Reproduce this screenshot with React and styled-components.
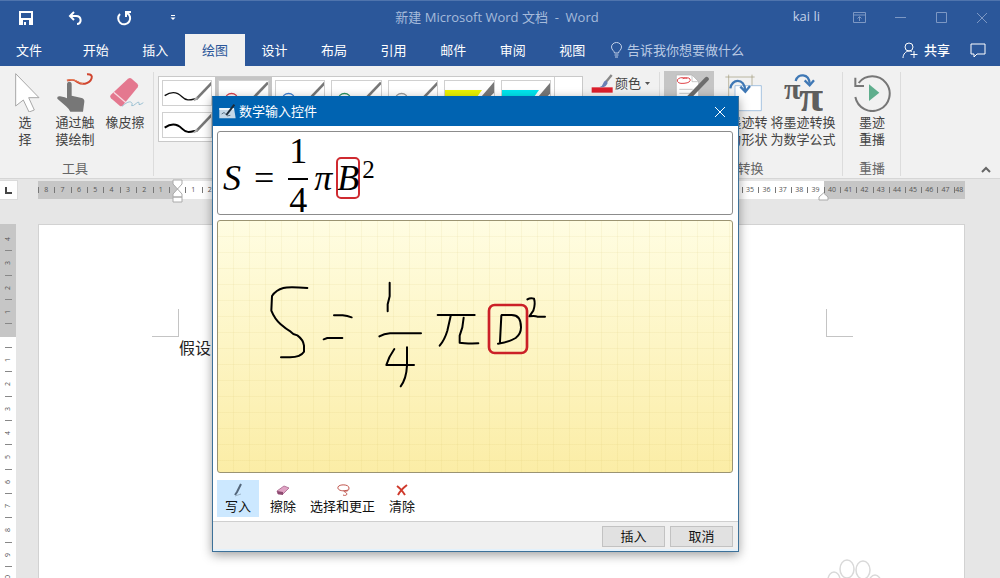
import React from 'react';
import styled, { createGlobalStyle, css } from 'styled-components';

const word = '#2b579a';

const Global = createGlobalStyle`
  *, *::before, *::after { box-sizing: border-box; }
  body {
    margin: 0;
    font-family: "Open Sans", "Noto Sans CJK SC", sans-serif;
    font-size: 13px;
    line-height: 17px;
    color: #444;
  }
  button, input { font: inherit; color: inherit; }
  svg { display: block; flex: none; }
`;

const bare = css`
  border: 0;
  padding: 0;
  margin: 0;
  background: none;
`;

/* ---------- shell ---------- */

const Shell = styled.div`
  position: relative;
  display: flex;
  flex-direction: column;
  height: 100vh;
  overflow: hidden;
  background: #e6e6e6;
`;

const TitleBar = styled.header`
  display: grid;
  grid-template-columns: 1fr auto 1fr;
  align-items: center;
  height: 34px;
  padding-right: 6px;
  border-top: 1px solid #4f74ad;
  background: ${word};
  color: #a6bbdb;
`;

const QuickAccess = styled.div`
  display: flex;
  gap: 25px;
  padding-left: 14px;
  color: #fff;
`;

const WindowControls = styled.div`
  display: flex;
  align-items: center;
  justify-content: flex-end;
  gap: 17px;
  color: #7d98c4;
`;

const IconButton = styled.button`
  ${bare}
  display: flex;
  align-items: center;
  justify-content: center;
  width: 24px;
  height: 24px;
`;

const UserName = styled.span`
  margin-right: 10px;
  padding-bottom: 3px;
  font-size: 13px;
  color: #c3d1e8;
`;

const DocTitle = styled.h1`
  margin: 0;
  font-size: 13px;
  font-weight: 400;
`;

const TabBar = styled.nav`
  display: flex;
  align-items: stretch;
  height: 32px;
  background: ${word};
  color: #fff;
`;

const Tabs = styled.div`
  display: flex;
  width: 536px;
`;

const Tab = styled.button`
  ${bare}
  flex: 1;
  background: ${p => (p.$active ? '#f1f1f1' : 'transparent')};
  color: ${p => (p.$active ? word : '#fff')};
`;

const FileTab = styled(Tab)`
  flex: none;
  width: 58px;
  margin-right: 8px;
`;

const TellMe = styled.label`
  display: flex;
  align-items: center;
  gap: 4px;
  padding-left: 8px;
  color: #c3d1e8;
`;

const TellMeInput = styled.input`
  ${bare}
  width: 140px;
  height: 28px;
  outline: 0;
  &::placeholder { color: #b9c9e3; opacity: 1; }
`;

const TabBarEnd = styled.div`
  display: flex;
  align-items: center;
  gap: 20px;
  margin-left: auto;
  padding-right: 14px;
`;

const BarButton = styled.button`
  ${bare}
  display: flex;
  align-items: center;
  gap: 6px;
  font-weight: 500;
`;

/* ---------- ribbon ---------- */

const Ribbon = styled.section`
  display: flex;
  flex: none;
  height: 113px;
  background: #f1f1f1;
  border-bottom: 1px solid #d6d6d6;
`;

const Group = styled.div`
  display: flex;
  flex-direction: column;
  padding: 5px ${p => p.$right || 0}px 0 ${p => p.$left || 0}px;
  background: linear-gradient(#dcdcdc, #dcdcdc) right 6px / 1px 104px no-repeat;
`;

const GroupBody = styled.div`
  display: flex;
  flex: 1;
  align-items: flex-start;
  gap: ${p => p.$gap || 0}px;
`;

const GroupLabel = styled.div`
  height: 18px;
  text-align: center;
  color: #666;
`;

const BigButton = styled.button`
  ${bare}
  display: flex;
  flex-direction: column;
  align-items: center;
  gap: 2px;
  width: ${p => p.$w}px;
  min-height: 80px;
  padding-top: 1px;
  white-space: pre;
  background: ${p => (p.$active ? '#c5c5c5' : 'none')};
`;

const Gallery = styled.div`
  display: flex;
  margin-top: 5px;
  height: 66px;
  border: 1px solid #c9c9c9;
  background: #fff;
`;

const PenGrid = styled.div`
  display: grid;
  grid-template-columns: repeat(7, 1fr);
  grid-auto-rows: 26px;
  gap: 6px;
  width: 395px;
  padding: 3px;
`;

const Pen = styled.button`
  ${bare}
  overflow: hidden;
  outline: 1px solid #d0d0d0;
  outline-offset: -1px;
  background: #fff;
  box-shadow: ${p => (p.$active ? '0 0 0 3px #c5c5c5' : 'none')};
`;

const GalleryMore = styled.button`
  ${bare}
  width: 28px;
  border-left: 1px solid #d0d0d0;
`;

const ColorButton = styled.button`
  ${bare}
  display: flex;
  align-items: center;
  gap: 2px;
  height: 24px;
`;

const Collapse = styled(IconButton)`
  align-self: flex-end;
  width: 20px;
  height: 18px;
  margin-left: auto;
  margin-right: 4px;
  color: #666;
`;

/* ---------- rulers and page ---------- */

const RulerRow = styled.div`
  display: flex;
  flex: none;
  align-items: center;
  height: 22px;
  padding-right: 35px;
`;

const TabStop = styled.button`
  ${bare}
  display: flex;
  align-items: center;
  justify-content: center;
  width: 18px;
  height: 20px;
  margin-right: 20px;
  border: 1px solid #dadada;
  border-left: 0;
  background: #fdfdfd;
`;

const HRuler = styled.div`
  position: relative;
  display: flex;
  flex: 1;
  height: 18px;
  font-size: 7px;
  line-height: 18px;
  color: #555;
`;

const HPart = styled.div`
  display: flex;
  flex: ${p => (p.$w ? `0 0 ${p.$w}px` : '1')};
  min-width: 0;
  overflow: hidden;
  background: ${p => (p.$margin ? '#c6c6c6' : '#fff')};
`;

const HCell = styled.span`
  flex: ${p => p.$grow || 20} 0 0;
  min-width: 0;
  text-align: center;
  background: linear-gradient(#777, #777) left 6px / 1px 6px no-repeat;
`;

const Marker = styled.svg`
  position: absolute;
  top: ${p => p.$top}px;
  left: ${p => p.$left};
  right: ${p => p.$right};
`;

const Workspace = styled.main`
  display: flex;
  flex: 1;
  min-height: 0;
  padding: 23px 35px 0 0;
`;

const VRuler = styled.div`
  width: 16px;
  flex: none;
  overflow: hidden;
  margin-right: 22px;
  background: #fff;
  font-size: 7px;
  color: #555;
`;

const VPart = styled.div`
  display: grid;
  height: ${p => p.$h}px;
  grid-template-rows: ${p => p.$rows};
  background: ${p => (p.$margin ? '#c6c6c6' : '#fff')};
`;

const VCell = styled.span`
  display: flex;
  align-items: center;
  justify-content: center;
  background: linear-gradient(#888, #888) center bottom / 7px 1px no-repeat;
  & > span { transform: rotate(-90deg); line-height: 8px; }
`;

const Page = styled.article`
  position: relative;
  flex: 1;
  overflow: hidden;
  border: 1px solid #d2d2d2;
  border-bottom: 0;
  background: #fff;
`;

const Crops = styled.div`
  display: flex;
  justify-content: space-between;
  padding: 84px 111px 0 113px;
`;

const Crop = styled.span`
  width: 27px;
  height: 28px;
  border: 0 solid #c4c4c4;
  border-bottom-width: 1px;
  border-left-width: ${p => (p.$side === 'right' ? 1 : 0)}px;
  border-right-width: ${p => (p.$side === 'left' ? 1 : 0)}px;
`;

const Paragraph = styled.p`
  margin: 0;
  padding-left: 140px;
  font-size: 16px;
  line-height: 22px;
  color: #222;
`;

const Paw = styled.svg`
  position: absolute;
  right: 82px;
  bottom: -28px;
`;

/* ---------- dialog ---------- */

const Dialog = styled.section`
  position: absolute;
  top: 96px;
  left: 212px;
  width: 527px;
  border: 1px solid #3d7199;
  border-top-color: #0063b1;
  background: #fff;
  color: #111;
  box-shadow: 0 3px 10px rgba(0, 0, 0, 0.38);
`;

const DialogTitle = styled.header`
  display: flex;
  align-items: center;
  gap: 3px;
  height: 29px;
  padding: 0 6px;
  background: #0063b1;
  color: #fff;
`;

const DialogHeading = styled.h2`
  flex: 1;
  margin: 0;
  font-size: 13px;
  font-weight: 400;
`;

const DialogBody = styled.div`
  display: flex;
  flex-direction: column;
  gap: 5px;
  padding: 5px 5px 4px 4px;
`;

const Preview = styled.div`
  display: flex;
  align-items: center;
  height: 84px;
  padding: 0 5px;
  border: 1px solid #8c8c8c;
  border-radius: 3px;
  font-family: "Liberation Serif", serif;
  font-size: 36px;
  line-height: 36px;
  color: #000;
`;

const Symbol = styled.span`
  margin-top: 10px;
  margin-right: ${p => p.$after}px;
`;

const Fraction = styled.span`
  display: flex;
  flex-direction: column;
  margin-right: 6px;
  text-align: center;
`;

const Numerator = styled.span`
  height: 47px;
  padding: 0 1px;
  border-bottom: 2px solid #000;
`;

const Denominator = styled.span`
  height: 34px;
  padding-top: 2px;
`;

const Boxed = styled.i`
  display: flex;
  justify-content: center;
  width: 24px;
  height: 42px;
  margin-top: 9px;
  border: 2px solid #cf2a30;
  border-radius: 5px;
  line-height: 38px;
`;

const Power = styled.sup`
  margin-left: 2px;
  margin-bottom: 8px;
  font-size: 25px;
  line-height: 25px;
`;

const InkPad = styled.div`
  height: 253px;
  border: 1px solid #9b9472;
  border-radius: 3px;
  overflow: hidden;
  background:
    repeating-linear-gradient(90deg, transparent 0 15px, rgba(190, 165, 60, 0.08) 15px 16px),
    repeating-linear-gradient(transparent 0 15px, rgba(190, 165, 60, 0.08) 15px 16px),
    linear-gradient(#fffde2, #fbeda6);
`;

const Tools = styled.div`
  display: flex;
  padding: 2px 0 0;
`;

const Tool = styled.button`
  ${bare}
  display: flex;
  flex-direction: column;
  align-items: center;
  gap: 1px;
  height: 37px;
  padding: 3px ${p => (p.$active ? 8 : 7)}px 0;
  margin-right: ${p => (p.$active ? 4 : 0)}px;
  background: ${p => (p.$active ? '#cce8ff' : 'none')};
`;

const DialogFooter = styled.footer`
  display: flex;
  justify-content: flex-end;
  gap: 5px;
  padding: 4px 5px 2px;
  border-top: 1px solid #cfcfcf;
  border-bottom: 2px solid #e3f1fb;
  background: #f0f0f0;
`;

const PushButton = styled.button`
  width: 63px;
  height: 21px;
  padding: 0;
  border: 1px solid #c2c2c2;
  background: #e1e1e1;
`;

/* ---------- drawings ---------- */

const Line = ({ w = 16, h = 16, sw = 1, children, box }) => (
  <svg width={w} height={h} viewBox={box || `0 0 ${w} ${h}`} fill="none" stroke="currentColor" strokeWidth={sw} aria-hidden="true">
    {children}
  </svg>
);

const Art = ({ x, children }) => (
  <svg width="40" height="40" viewBox={`${x} 35 120 120`} fill="none" aria-hidden="true">{children}</svg>
);

const ArrowArt = () => (
  <Art x={15}>
    <path d="M47 40V137L70 119L87 155L103 149L86 112H117Z" fill="#fff" stroke="#a8a8a8" strokeWidth="3" />
  </Art>
);

const TouchArt = () => (
  <Art x={162}>
    <path d="M198 72q0-8 7-8t7 8v34l30 7q9 3 8 11l-4 30h-38q-5-9-13-16l-26-23q-1-8 8-7l14 3 7 3z" fill="#777" />
    <path d="M198 61C226 50 228 75 252 70C272 66 283 40 258 42" stroke="#d0452f" strokeWidth="6" />
    <path d="M198 60C222 52 230 68 246 70" stroke="#e8825a" strokeWidth="3" />
  </Art>
);

const EraserArt = () => (
  <Art x={315}>
    <path d="M384 55q6-4 11 0l17 15q5 5 1 11l-44 54q-5 5-10 1l-26-22q-5-5-1-10z" fill="#e4788f" />
    <path d="M341 96l37 31" stroke="#f8dbe1" strokeWidth="4" />
    <path d="M366 138q18-16 26-13t3 11q4 2 14-7t8 4q5 0 13-6" stroke="#74aac4" strokeWidth="2" />
  </Art>
);

const EditorArt = () => (
  <Art x={327}>
    <path d="M349 44h47l20 20v91h-67z" fill="#fff" stroke="#b0b0b0" strokeWidth="2" />
    <path d="M396 44v20h20" stroke="#b0b0b0" strokeWidth="2" />
    <path d="M382 54q-25-6-30 5q-1 12 20 10q22-2 18-13q-5-7-22-1" stroke="#e0454a" strokeWidth="3" />
    <path d="M358 87h40M358 99h36M358 111h30" stroke="#aaa" strokeWidth="2" />
    <path d="M440 56L380 118" stroke="#6d6d6d" strokeWidth="13" strokeLinecap="round" />
  </Art>
);

const ShapeArt = () => (
  <Art x={483}>
    <path d="M503 43v65M573 43v60M493 50h88" stroke="#a19a7a" strokeWidth="2" />
    <path d="M522 76h79v75h-79z" fill="#fff" stroke="#7fa9d4" strokeWidth="2" />
    <path d="M508 84C512 56 548 50 553 90" stroke="#3f78b5" strokeWidth="7" />
    <path d="M538 79l15 15 14-17" stroke="#3f78b5" strokeWidth="7" />
  </Art>
);

const PiText = styled.text`
  font-family: "Liberation Serif", serif;
  font-weight: 700;
  fill: #5e5e5e;
`;

const MathArt = () => (
  <Art x={670}>
    <PiText x="698" y="115" fontSize="90" textAnchor="middle">π</PiText>
    <PiText x="754" y="152" fontSize="132" textAnchor="middle">π</PiText>
    <path d="M708 62C714 38 748 38 750 70" stroke="#3f78b5" strokeWidth="7" />
    <path d="M735 60l15 15 13-15" stroke="#3f78b5" strokeWidth="7" />
  </Art>
);

const ReplayArt = () => (
  <Art x={873}>
    <path d="M893 68A52 52 0 1 1 883 110" stroke="#777" strokeWidth="6" />
    <path d="M883 52v25h26" stroke="#777" strokeWidth="6" />
    <path d="M924 72v50l31-25z" fill="#5fae8d" />
  </Art>
);

const PenArt = ({ kind, color }) => (
  <svg width="51" height="26" viewBox="0 0 153 78" fill="none" aria-hidden="true">
    {kind === 'mark' ? (
      <>
        <path d="M2 30h112l-34 48H2z" fill={color} />
        <path d="M153 2v34l-46 42H88z" fill="#777" />
      </>
    ) : (
      <>
        {kind === 'loop'
          ? <path d="M22 60C20 34 62 34 58 60S22 76 22 60" stroke={color} strokeWidth="4" />
          : <path d="M8 47C30 32 48 38 60 50C74 64 84 60 102 56" stroke={color} strokeWidth={kind === 'bold' ? 6 : 4} />}
        <path d="M150 8L102 58" stroke="#777" strokeWidth="8" />
        <path d="M106 52L96 62" stroke="#aaa" strokeWidth="6" />
      </>
    )}
  </svg>
);

const Ink = () => (
  <svg width="514" height="251" viewBox="24 6 1542 753" fill="none" stroke="#000" strokeWidth="6" strokeLinecap="round" strokeLinejoin="round" role="img" aria-label="S = 1/4 π D²">
    <path d="M292 207C250 204 232 204 220 207Q198 213 186 231L184 275Q194 300 212 316Q228 330 242 338L250 345L262 349Q280 362 282 380V398Q272 414 240 415H213" />
    <path d="M372 289H398Q412 291 425 295M341 361L352 357H397" />
    <path d="M539 191V232L533 256V277M508 352Q522 344 540 343H633" />
    <path d="M553 390Q536 414 529 438H612M591 385V440Q589 480 572 502" />
    <path d="M683 288H794M722 291L712 335Q704 362 689 380M761 296L757 325L749 350V371Q765 374 805 373" />
    <path d="M874 290L870 368M864 374Q895 370 917 357Q933 345 933 325Q933 288 905 288H875" />
    <path d="M952 241Q962 235 972 239Q977 255 970 275L958 292Q975 289 982 293H1005" />
    <rect x="837" y="258" width="114" height="144" rx="17" stroke="#cb2027" strokeWidth="8" />
  </svg>
);

const pens = [
  { kind: 'wave', color: '#111', name: '黑色笔' },
  { kind: 'loop', color: '#d6404c', name: '红色笔', active: true },
  { kind: 'loop', color: '#3f7fd0', name: '蓝色笔' },
  { kind: 'loop', color: '#2c9160', name: '绿色笔' },
  { kind: 'loop', color: '#999', name: '灰色笔' },
  { kind: 'mark', color: '#ebf300', name: '黄色荧光笔' },
  { kind: 'mark', color: '#00e5ee', name: '青色荧光笔' },
  { kind: 'bold', color: '#000', name: '粗黑色笔' },
];

const range = (from, to) => Array.from({ length: to - from + 1 }, (_, i) => from + i);

const VNumbers = ({ list }) => list.map(n => <VCell key={n}><span>{n}</span></VCell>);

export default function App() {
  return (
    <Shell>
      <Global />
      <TitleBar>
        <QuickAccess>
          <IconButton aria-label="保存">
            <Line w={14} h={14}><path d="M0 0h14v14H0zM2 2v5h10V2zM4 9v5h1v-3h2v3h3V9z" fill="currentColor" fillRule="evenodd" stroke="none" /></Line>
          </IconButton>
          <IconButton aria-label="撤消">
            <Line w={14} h={14} sw={2}><path d="M6 1L2 5l4 4M2 5h6c6 0 6 8 1 8" /></Line>
          </IconButton>
          <IconButton aria-label="重复">
            <Line w={16} h={16} sw={2}><path d="M4 4a6 6 0 1 0 7-1" /><path d="M15 2h-5v5" /></Line>
          </IconButton>
          <IconButton aria-label="自定义快速访问工具栏">
            <Line w={6} h={6}><path d="M1 .5h4" /><path d="M.5 2.5h5L3 5z" fill="currentColor" stroke="none" /></Line>
          </IconButton>
        </QuickAccess>
        <DocTitle>新建 Microsoft Word 文档&nbsp; - &nbsp;Word</DocTitle>
        <WindowControls>
          <UserName>kai li</UserName>
          <IconButton aria-label="功能区显示选项">
            <Line w={13} h={12}><path d="M.5 .5h12v10H.5zM.5 3h12M6.5 9V5M4.500 6.500l2-2 2 2" /></Line>
          </IconButton>
          <IconButton aria-label="最小化"><Line w={11} h={11}><path d="M0 5.500h11" /></Line></IconButton>
          <IconButton aria-label="最大化"><Line w={11} h={11}><path d="M.5 .5h10v10H.5z" /></Line></IconButton>
          <IconButton aria-label="关闭"><Line w={12} h={12}><path d="M1 1l10 10M11 1L1 11" /></Line></IconButton>
        </WindowControls>
      </TitleBar>

      <TabBar>
        <FileTab>文件</FileTab>
        <Tabs>
          {['开始', '插入', '绘图', '设计', '布局', '引用', '邮件', '审阅', '视图'].map(t => (
            <Tab key={t} $active={t === '绘图'}>{t}</Tab>
          ))}
        </Tabs>
        <TellMe>
          <Line w={13} h={16}><path d="M4.500 11c0-2-3-3-3-6a5 4.500 0 0 1 10 0c0 3-3 4-3 6zM4.500 13h4M5 15h3" /></Line>
          <TellMeInput placeholder="告诉我你想要做什么" aria-label="告诉我你想要做什么" />
        </TellMe>
        <TabBarEnd>
          <BarButton>
            <Line w={16} h={17}><circle cx="7" cy="5" r="4" /><path d="M1 16c0-4 3-7 6-7 1 0 2 0 3 1M12 9v7M8.500 12.500h7" /></Line>
            共享
          </BarButton>
          <BarButton aria-label="批注">
            <Line w={16} h={15}><path d="M1 1h14v10H7l-3 3v-3H1z" /></Line>
          </BarButton>
        </TabBarEnd>
      </TabBar>

      <Ribbon>
        <Group $right={4}>
          <GroupBody>
            <BigButton $w={50}><ArrowArt />{'选\n择'}</BigButton>
            <BigButton $w={50}><TouchArt />{'通过触\n摸绘制'}</BigButton>
            <BigButton $w={50}><EraserArt />橡皮擦</BigButton>
          </GroupBody>
          <GroupLabel>工具</GroupLabel>
        </Group>
        <Group $left={4} $right={8}>
          <GroupBody $gap={8}>
            <Gallery>
              <PenGrid>
                {pens.map(p => (
                  <Pen key={p.name} $active={p.active} aria-label={p.name}><PenArt {...p} /></Pen>
                ))}
              </PenGrid>
              <GalleryMore aria-label="其他笔" />
            </Gallery>
            <ColorButton>
              <svg width="22" height="20" viewBox="0 0 66 60" fill="none" aria-hidden="true">
                <path d="M2 43h63v16H2z" fill="#dc1f2c" />
                <path d="M62 6L44 28" stroke="#888" strokeWidth="7" />
                <path d="M46 22q-8 2-10 10q-2 8-10 10q18 4 24-12z" fill="#6a7fb4" />
              </svg>
              颜色
              <Line w={9} h={5}><path d="M2 1h5L4.500 4z" fill="#555" stroke="none" /></Line>
            </ColorButton>
          </GroupBody>
        </Group>
        <Group $left={4} $right={6}>
          <GroupBody>
            <BigButton $w={50} $active aria-label="墨迹编辑器"><EditorArt /></BigButton>
            <BigButton $w={55}><ShapeArt />{'将墨迹转\n换为形状'}</BigButton>
            <BigButton $w={68}><MathArt />{'将墨迹转换\n为数学公式'}</BigButton>
          </GroupBody>
          <GroupLabel>转换</GroupLabel>
        </Group>
        <Group>
          <GroupBody>
            <BigButton $w={58}><ReplayArt />{'墨迹\n重播'}</BigButton>
          </GroupBody>
          <GroupLabel>重播</GroupLabel>
        </Group>
        <Collapse aria-label="折叠功能区">
          <Line w={10} h={7} sw={2}><path d="M1 6l4-4 4 4" /></Line>
        </Collapse>
      </Ribbon>

      <RulerRow>
        <TabStop aria-label="左对齐制表符"><Line w={7} h={7} sw={2}><path d="M1 0v6h6" /></Line></TabStop>
        <HRuler>
          <HPart $w={139} $margin>
            {range(1, 8).reverse().map(n => <HCell key={n}>{n}</HCell>)}
            <HCell $grow={10} />
          </HPart>
          <HPart>
            <HCell $grow={10} />
            {range(1, 39).map(n => <HCell key={n}>{n}</HCell>)}
          </HPart>
          <HPart $w={141} $margin>
            {range(40, 47).map(n => <HCell key={n}>{n}</HCell>)}
            <HCell $grow={14}>48</HCell>
          </HPart>
          <Marker $top={-2} $left="134px" width="11" height="25" viewBox="0 0 11 25" fill="#fff" stroke="#aaa" aria-hidden="true">
            <path d="M1 1h9v4l-4.500 5L1 5zM1 15l4.500-5L10 15v3H1zM1 18h9v5H1z" />
          </Marker>
          <Marker $top={11} $right="136px" width="11" height="9" viewBox="0 0 11 9" fill="#fff" stroke="#aaa" aria-hidden="true">
            <path d="M1 5l4.500-4L10 5v3H1z" />
          </Marker>
        </HRuler>
      </RulerRow>

      <Workspace>
        <VRuler>
          <VPart $margin $h={113} $rows="3px repeat(4, 1fr) 13px">
            <span />
            <VNumbers list={[4, 3, 2, 1]} />
          </VPart>
          <VPart $h={230} $rows="11px repeat(9, 1fr)">
            <VCell />
            <VNumbers list={range(1, 9)} />
          </VPart>
          <VPart $h={24} $rows="24px"><VNumbers list={[10]} /></VPart>
        </VRuler>
        <Page>
          <Crops><Crop $side="left" /><Crop $side="right" /></Crops>
          <Paragraph>假设</Paragraph>
          <Paw width="56" height="48" viewBox="0 0 56 48" fill="none" stroke="#d9d9d9" strokeWidth="1.500" aria-hidden="true">
            <ellipse cx="21" cy="11" rx="7" ry="9" />
            <ellipse cx="37" cy="12" rx="7" ry="9" />
            <ellipse cx="8" cy="22" rx="6" ry="8" />
            <ellipse cx="49" cy="25" rx="6" ry="8" />
            <path d="M28 22c9 0 10 8 15 13s1 11-6 11H18c-8 0-10-7-5-11s7-13 15-13z" />
          </Paw>
        </Page>
      </Workspace>

      <Dialog role="dialog" aria-labelledby="math-title">
        <DialogTitle>
          <svg width="17" height="15" viewBox="0 0 51 45" fill="none" aria-hidden="true">
            <path d="M1 12h44l5 31H1z" fill="#c5d9e8" />
            <path d="M1 12h44v6H1z" fill="#eef5fa" />
            <path d="M8 30q8-9 12 0t14 4" stroke="#5c7385" strokeWidth="3" />
            <path d="M46 2L22 33" stroke="#1c2b38" strokeWidth="6" />
          </svg>
          <DialogHeading id="math-title">数学输入控件</DialogHeading>
          <IconButton aria-label="关闭"><Line w={12} h={12}><path d="M1 1l10 10M11 1L1 11" /></Line></IconButton>
        </DialogTitle>
        <DialogBody>
          <Preview>
            <Symbol as="i" $after={13}>S</Symbol>
            <Symbol $after={14}>=</Symbol>
            <Fraction><Numerator>1</Numerator><Denominator>4</Denominator></Fraction>
            <Symbol as="i" $after={4}>π</Symbol>
            <Boxed>B</Boxed>
            <Power>2</Power>
          </Preview>
          <InkPad><Ink /></InkPad>
          <Tools>
            <Tool $active>
              <Line w={14} h={14} sw={2}><path d="M10 1L6 9l-2 3" stroke="#54677c" /><path d="M4 13l6-2" stroke="#9db4c8" strokeWidth="1" /></Line>
              写入
            </Tool>
            <Tool>
              <Line w={14} h={14}><path d="M1 8l7-5 5 2-6 6-5 0z" fill="#e0a3c4" stroke="#b5799c" /><path d="M1 8l6 1v3l-5-1z" fill="#8c4a70" stroke="none" /></Line>
              擦除
            </Tool>
            <Tool>
              <Line w={14} h={14}><path d="M12 7C6 9 1 7 2 4s11-3 11 1-4 3-5 3 3 2 3 3-2 2-4 1" stroke="#c0544c" /></Line>
              选择和更正
            </Tool>
            <Tool>
              <Line w={14} h={14} sw={2}><path d="M2 3c3 2 6 6 8 9M12 2C8 5 5 8 3 12" stroke="#cf3a2c" /></Line>
              清除
            </Tool>
          </Tools>
        </DialogBody>
        <DialogFooter>
          <PushButton>插入</PushButton>
          <PushButton>取消</PushButton>
        </DialogFooter>
      </Dialog>
    </Shell>
  );
}
